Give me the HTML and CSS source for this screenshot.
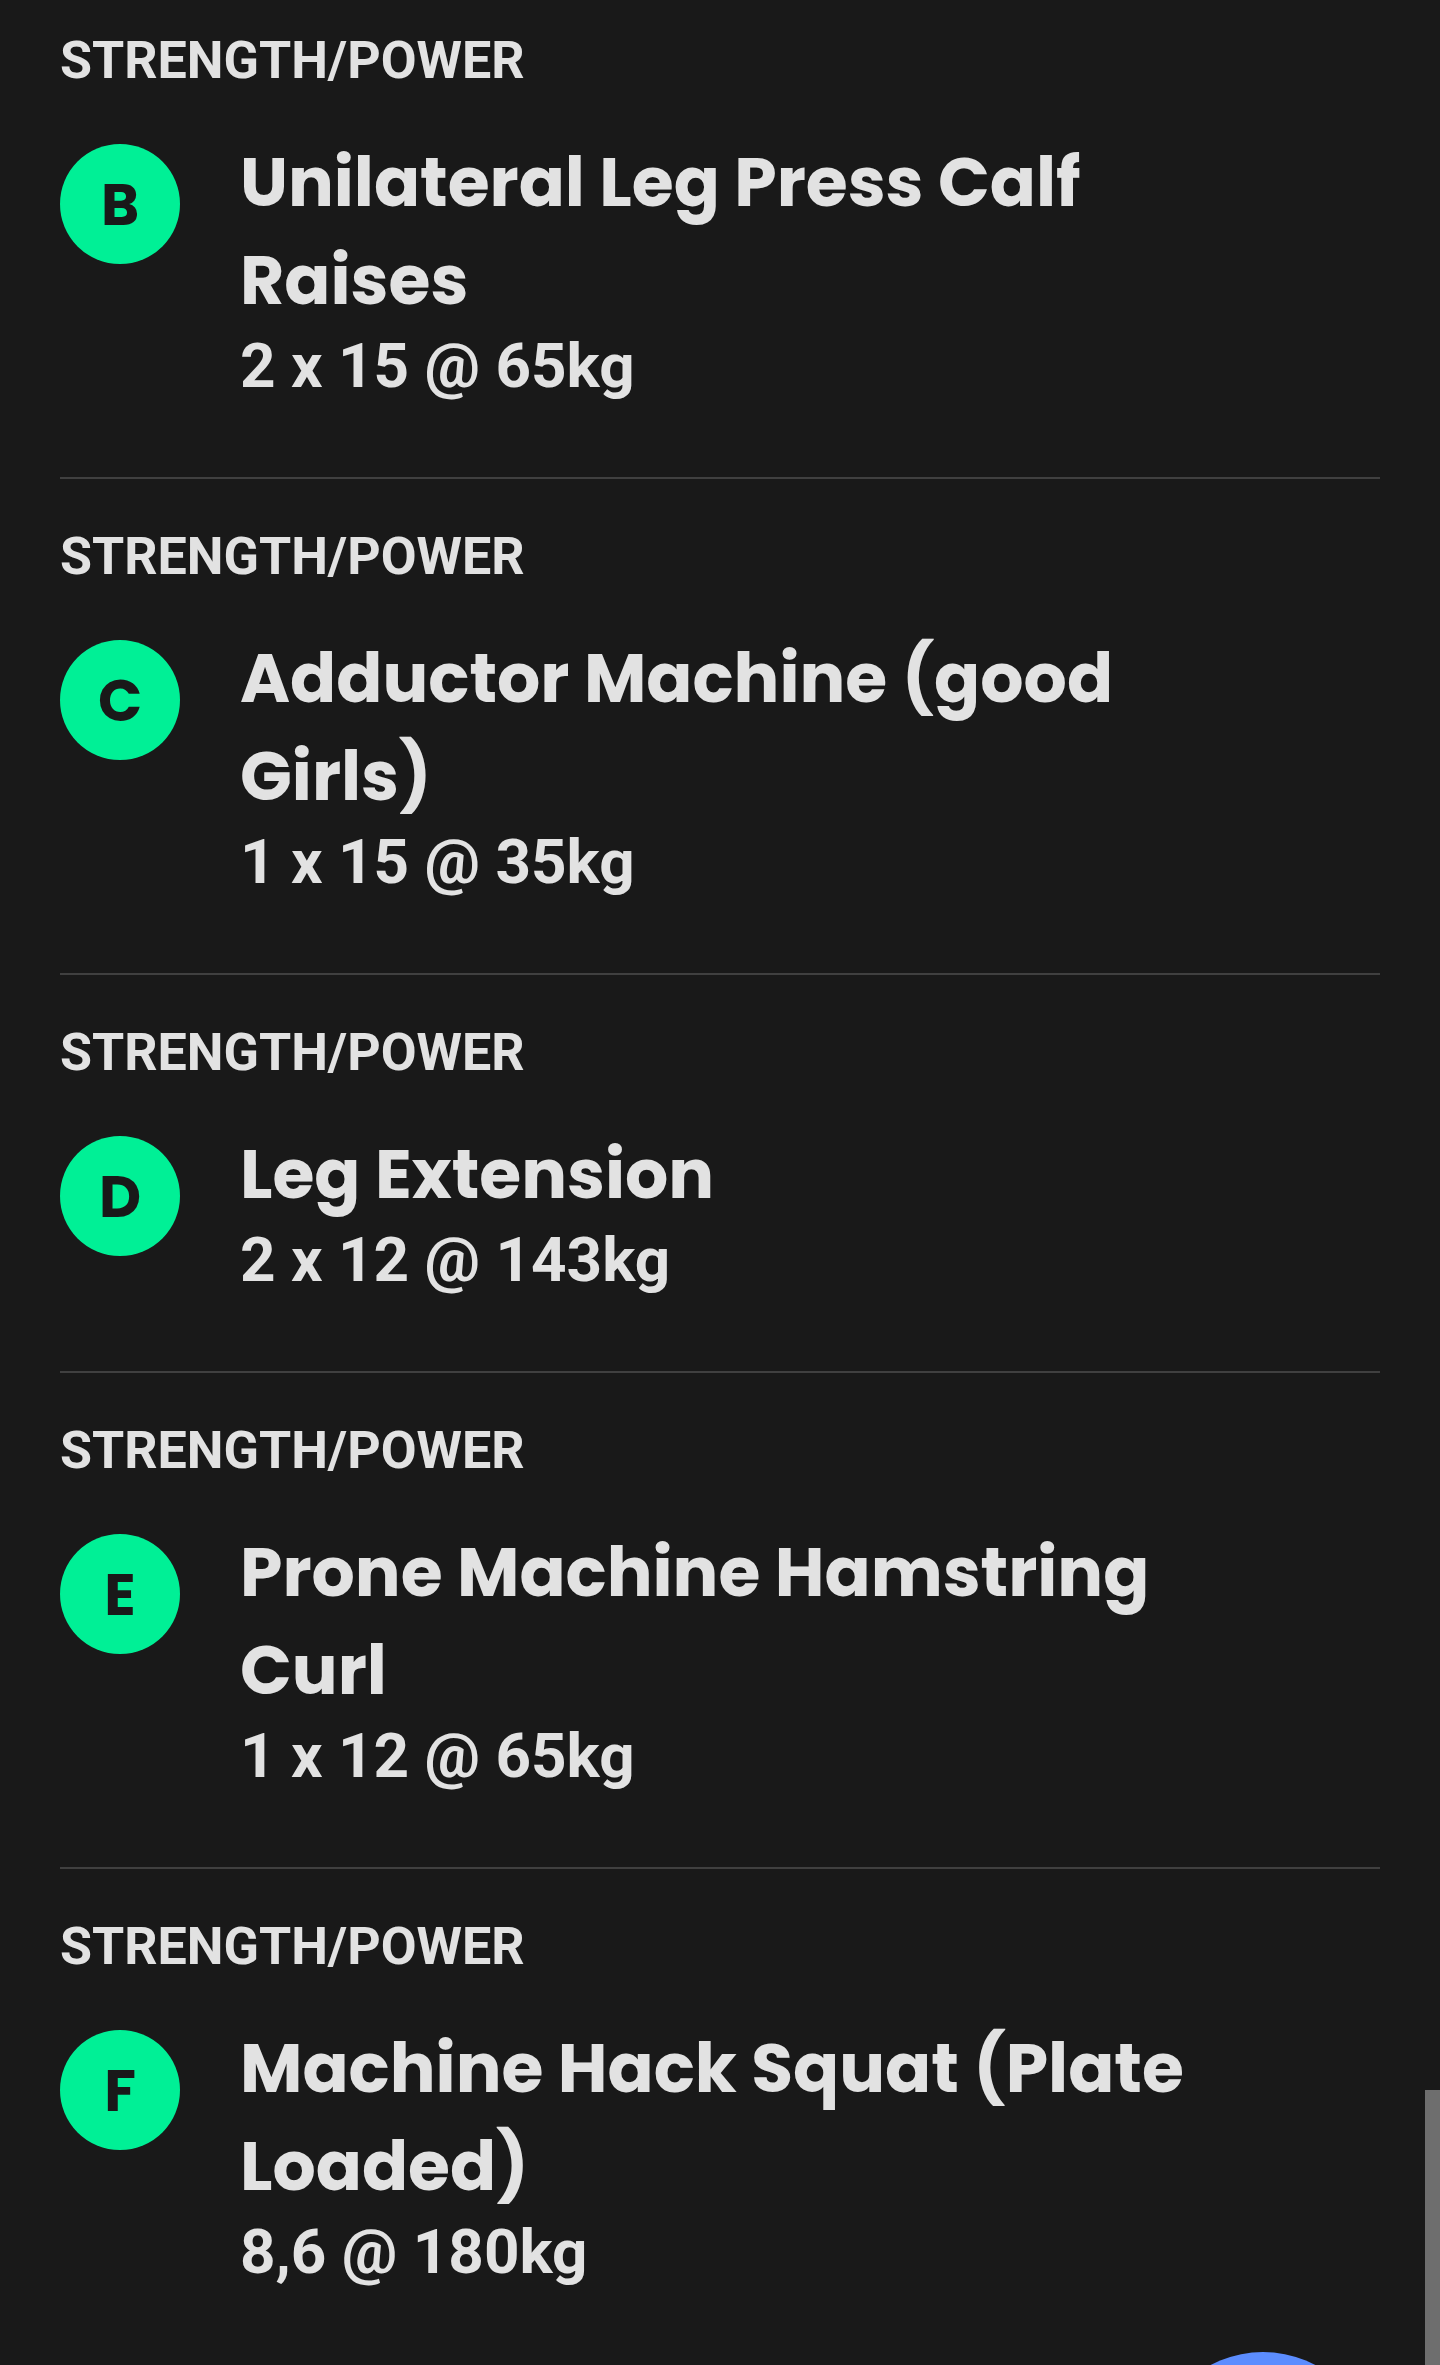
FILE: index.html
```
<!DOCTYPE html>
<html lang="en">
<head>
    <meta charset="UTF-8">
    <meta name="viewport" content="width=device-width, initial-scale=1.0">
    <title>Workout</title>
    <link rel="stylesheet" href="styles.css">
</head>
<body>
    <main class="workout">
        <section class="exercise">
            <p class="category">STRENGTH/POWER</p>
            <div class="row">
                <span class="badge">B</span>
                <div class="info">
                    <h2>Unilateral Leg Press Calf Raises</h2>
                    <p class="sets">2 x 15 @ 65kg</p>
                </div>
            </div>
        </section>

        <section class="exercise">
            <p class="category">STRENGTH/POWER</p>
            <div class="row">
                <span class="badge">C</span>
                <div class="info">
                    <h2>Adductor Machine (good Girls)</h2>
                    <p class="sets">1 x 15 @ 35kg</p>
                </div>
            </div>
        </section>

        <section class="exercise">
            <p class="category">STRENGTH/POWER</p>
            <div class="row">
                <span class="badge">D</span>
                <div class="info">
                    <h2>Leg Extension</h2>
                    <p class="sets">2 x 12 @ 143kg</p>
                </div>
            </div>
        </section>

        <section class="exercise">
            <p class="category">STRENGTH/POWER</p>
            <div class="row">
                <span class="badge">E</span>
                <div class="info">
                    <h2>Prone Machine Hamstring Curl</h2>
                    <p class="sets">1 x 12 @ 65kg</p>
                </div>
            </div>
        </section>

        <section class="exercise">
            <p class="category">STRENGTH/POWER</p>
            <div class="row">
                <span class="badge">F</span>
                <div class="info">
                    <h2>Machine Hack Squat (Plate Loaded)</h2>
                    <p class="sets">8,6 @ 180kg</p>
                </div>
            </div>
        </section>
    </main>

    <button class="fab" type="button" aria-label="Chat"></button>
    <div class="scroll-thumb"></div>
</body>
</html>
```

FILE: styles.css
```
body {
    margin: 0;
    background-color: #191919;
    color: #e2e2e2;
    font-family: Roboto, Arial, sans-serif;
}
h2, p {
    margin: 0;
}
.workout {
    padding: 0 60px;
}
.exercise {
    padding: 47px 0 75px;
    border-bottom: 2px solid #404040;
}
.exercise:first-child {
    padding-top: 30px;
}
.exercise:last-child {
    border-bottom: none;
}
.category {
    margin-bottom: 42px;
    font-size: 52px;
    line-height: 62px;
    font-weight: 700;
}
.row {
    display: flex;
    align-items: flex-start;
    gap: 60px;
}
.badge {
    display: flex;
    align-items: center;
    justify-content: center;
    flex-shrink: 0;
    width: 120px;
    height: 120px;
    margin-top: 10px;
    border-radius: 50%;
    background-color: #00f096; /* green */
    color: #191919;
    font-family: Poppins, Inter, sans-serif;
    font-size: 58px;
    font-weight: 700;
}
.info {
    flex: 1;
    padding-right: 120px;
}
.info h2 {
    font-family: Poppins, Inter, sans-serif;
    font-size: 68px;
    line-height: 98px;
    font-weight: 700;
}
.sets {
    font-size: 62px;
    line-height: 72px;
    font-weight: 700;
}

/* floating button, mostly below the fold */
.fab {
    position: fixed;
    right: 65px;
    bottom: -211px;
    width: 224px;
    height: 224px;
    padding: 0;
    border: none;
    border-radius: 50%;
    background-color: #5c8dff;
    cursor: pointer;
}
.scroll-thumb {
    position: fixed;
    right: 0;
    bottom: 0;
    width: 15px;
    height: 275px;
    background-color: #6e6e6e;
}
```
